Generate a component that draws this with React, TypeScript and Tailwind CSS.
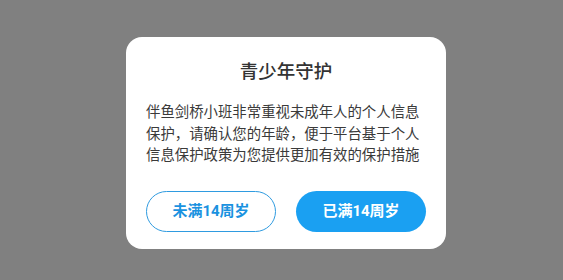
import React from "react";

const font = { fontFamily: 'Roboto, "Noto Sans CJK SC", "Noto Sans", sans-serif' };

export default function App() {
  return (
    <div className="h-[280px] w-full bg-[#808080] pl-[126px] pt-[37px]" style={font}>
      <div className="flex h-[212px] w-[320px] flex-col rounded-[16px] bg-white px-[20px] pt-[22px] pb-[17px]">
        <h2 className="text-center text-[18.5px] leading-[27px] font-medium text-[#333333]">
          青少年守护
        </h2>
        <p className="mt-[16px] text-[14.4px] leading-[21.5px] text-[#3a3a3a]">
          伴鱼剑桥小班非常重视未成年人的个人信息保护，请确认您的年龄，便于平台基于个人信息保护政策为您提供更加有效的保护措施
        </p>
        <div className="mt-auto flex gap-[20px]">
          <button className="h-[41px] w-[130px] rounded-full border border-[#2f9be0] bg-white text-[15px] font-bold text-[#1a92e0]">
            未满14周岁
          </button>
          <button className="h-[41px] w-[130px] rounded-full bg-[#1aa0f2] text-[15px] font-bold text-white">
            已满14周岁
          </button>
        </div>
      </div>
    </div>
  );
}
